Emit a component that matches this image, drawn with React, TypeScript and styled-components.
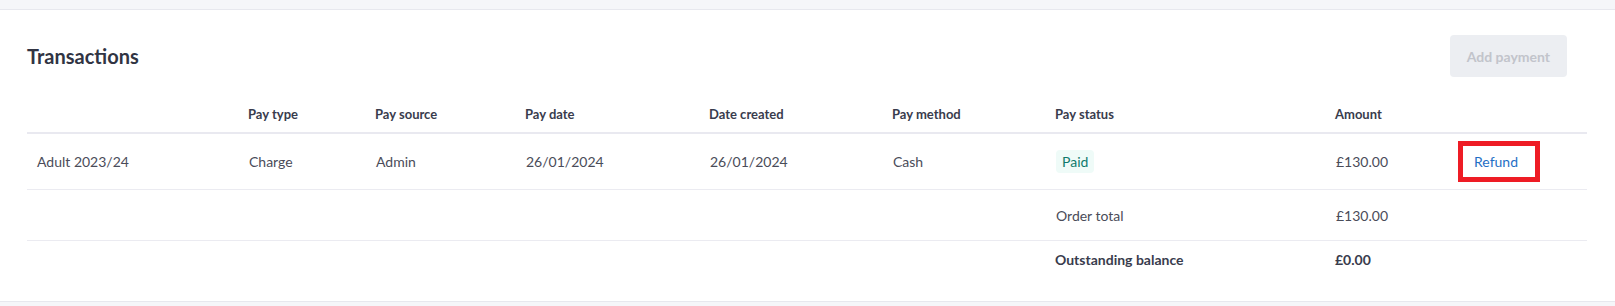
import React from "react";
import styled, { createGlobalStyle } from "styled-components";

const GlobalStyle = createGlobalStyle`
  body {
    margin: 0;
    background-color: #f5f6f9;
    font-family: Lato, "Noto Sans", sans-serif;
  }
`;

const Page = styled.div`
  padding-top: 9px;
`;

const Card = styled.section`
  background-color: #fff;
  border-top: 1px solid #e7e8ee;
  border-bottom: 1px solid #e7e8ee;
  padding: 0 28px 24px 27px;
`;

const CardHeader = styled.div`
  display: flex;
  align-items: center;
  justify-content: space-between;
  padding: 25px 20px 0 0;
`;

const Title = styled.h2`
  margin: 0;
  font-size: 20px;
  font-weight: 700;
  color: #313443;
`;

const AddButton = styled.button`
  height: 42px;
  padding: 0 17px;
  border: none;
  border-radius: 4px;
  background-color: #eceef2;
  color: #c2c4cb;
  font-family: inherit;
  font-size: 14px;
  font-weight: 700;
  cursor: not-allowed;
`;

const columns = "212px 127px 150px 184px 183px 163px 280px 122px 1fr";

const Row = styled.div<{ $height: number; $head?: boolean; $last?: boolean }>`
  display: grid;
  grid-template-columns: ${columns};
  align-items: ${(p) => (p.$head ? "end" : "center")};
  height: ${(p) => p.$height}px;
  padding-bottom: ${(p) => (p.$head ? "9px" : "0")};
  box-sizing: content-box;
  border-bottom: ${(p) =>
    p.$last ? "none" : p.$head ? "2px solid #e9e9f0" : "1px solid #ebebf1"};
`;

const HeadCell = styled.div`
  padding-left: 9px;
  font-size: 13px;
  font-weight: 700;
  line-height: 17px;
  color: #393c4d;
`;

const Cell = styled.div<{ $strong?: boolean }>`
  padding-left: ${(p) => (p.$strong ? "9px" : "10px")};
  font-size: 14px;
  font-weight: ${(p) => (p.$strong ? 700 : 400)};
  line-height: 17px;
  color: ${(p) => (p.$strong ? "#393c4d" : "#4a4c59")};
`;

const StatusBadge = styled.span`
  display: inline-block;
  padding: 3px 6px;
  border-radius: 4px;
  background-color: #effbf8;
  color: #0e7a6c;
`;

const RefundLink = styled.a`
  display: inline-block;
  padding: 7px 17px 7px 11px;
  border: 5px solid #ee1c25;
  color: #1f6fc5;
  text-decoration: none;
  cursor: pointer;
`;

const headings = [
  "",
  "Pay type",
  "Pay source",
  "Pay date",
  "Date created",
  "Pay method",
  "Pay status",
  "Amount",
  "",
];

export default function App() {
  return (
    <Page>
      <GlobalStyle />
      <Card>
        <CardHeader>
          <Title>Transactions</Title>
          <AddButton disabled>Add payment</AddButton>
        </CardHeader>

        <Row $head $height={46}>
          {headings.map((h, i) => (
            <HeadCell key={i}>{h}</HeadCell>
          ))}
        </Row>

        <Row $height={55}>
          <Cell>Adult 2023/24</Cell>
          <Cell>Charge</Cell>
          <Cell>Admin</Cell>
          <Cell>26/01/2024</Cell>
          <Cell>26/01/2024</Cell>
          <Cell>Cash</Cell>
          <Cell>
            <StatusBadge>Paid</StatusBadge>
          </Cell>
          <Cell>£130.00</Cell>
          <Cell>
            <RefundLink>Refund</RefundLink>
          </Cell>
        </Row>

        <Row $height={50}>
          <Cell />
          <Cell />
          <Cell />
          <Cell />
          <Cell />
          <Cell />
          <Cell>Order total</Cell>
          <Cell>£130.00</Cell>
          <Cell />
        </Row>

        <Row $height={36} $last>
          <Cell />
          <Cell />
          <Cell />
          <Cell />
          <Cell />
          <Cell />
          <Cell $strong>Outstanding balance</Cell>
          <Cell $strong>£0.00</Cell>
          <Cell />
        </Row>
      </Card>
    </Page>
  );
}
